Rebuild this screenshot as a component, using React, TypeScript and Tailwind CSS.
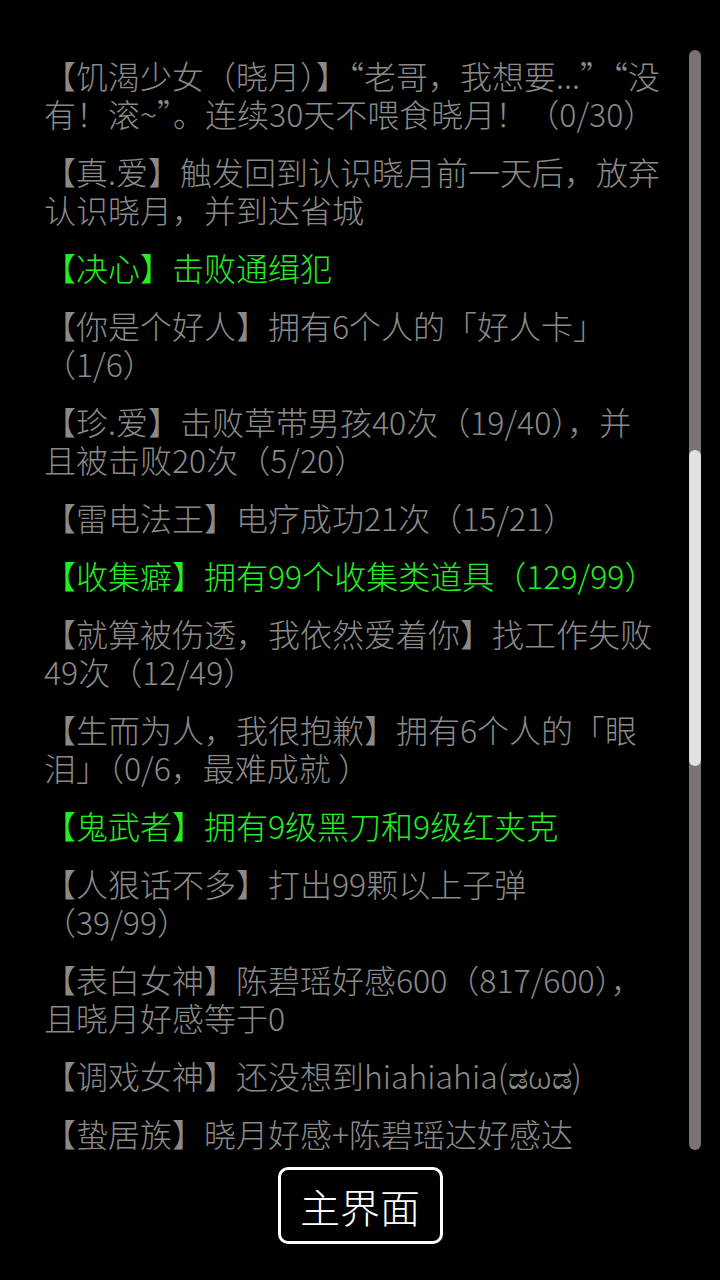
const GRAY = 'text-[#8a8a8a]'
const GREEN = 'text-[#22ee22]'

type Entry = { lines: string[]; done?: boolean }

const entries: Entry[] = [
  { lines: ['【饥渴少女（晓月）】“老哥，我想要...”“没', '有！滚~”。连续30天不喂食晓月！（0/30）'] },
  { lines: ['【真.爱】触发回到认识晓月前一天后，放弃', '认识晓月，并到达省城'] },
  { lines: ['【决心】击败通缉犯'], done: true },
  { lines: ['【你是个好人】拥有6个人的「好人卡」', '（1/6）'] },
  { lines: ['【珍.爱】击败草带男孩40次（19/40），并', '且被击败20次（5/20）'] },
  { lines: ['【雷电法王】电疗成功21次（15/21）'] },
  { lines: ['【收集癖】拥有99个收集类道具（129/99）'], done: true },
  { lines: ['【就算被伤透，我依然爱着你】找工作失败', '49次（12/49）'] },
  { lines: ['【生而为人，我很抱歉】拥有6个人的「眼', '泪」（0/6，最难成就 ）'] },
  { lines: ['【鬼武者】拥有9级黑刀和9级红夹克'], done: true },
  { lines: ['【人狠话不多】打出99颗以上子弹', '（39/99）'] },
  { lines: ['【表白女神】陈碧瑶好感600（817/600），', '且晓月好感等于0'] },
  { lines: ['【调戏女神】还没想到hiahiahia(ಡωಡ)'] },
  { lines: ['【蛰居族】晓月好感+陈碧瑶达好感达'] },
]

export default function App() {
  return (
    <div
      className="w-[720px] h-[1280px] bg-black flex flex-col items-center overflow-hidden font-light"
      style={{ fontFamily: '"Noto Sans CJK SC", "Noto Sans", sans-serif' }}
    >
      {/* List + scrollbar */}
      <div className="w-full h-[1104px] mt-[50px] flex">
        <div className="flex-1 h-full overflow-hidden pl-[44px] pt-[6px]">
          <div className="flex flex-col gap-[20px]">
            {entries.map((e, i) => (
              <p
                key={i}
                className={`text-[32px] leading-[38px] whitespace-nowrap ${e.done ? GREEN : GRAY}`}
              >
                {e.lines.map((l, j) => (
                  <span key={j} className="block">
                    {l}
                  </span>
                ))}
              </p>
            ))}
          </div>
        </div>
        <div className="w-[12px] h-[1100px] mr-[19px] ml-[5px] rounded-full bg-[#7a7276] flex flex-col overflow-hidden">
          <div className="h-[400px] shrink-0" />
          <div className="h-[316px] shrink-0 bg-[#dfe2e3] rounded-full" />
        </div>
      </div>

      {/* Button */}
      <button className="mt-[13px] w-[165px] h-[77px] border-[3px] border-white rounded-[10px] text-white text-[40px] leading-none flex items-center justify-center">
        主界面
      </button>
    </div>
  )
}
